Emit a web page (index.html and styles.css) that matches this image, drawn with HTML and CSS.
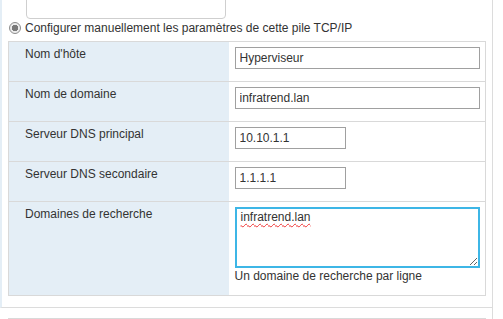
FILE: index.html
```html
<!DOCTYPE html>
<html lang="fr">
<head>
  <meta charset="UTF-8">
  <title>Pile TCP/IP</title>
  <link rel="stylesheet" href="styles.css">
</head>
<body>
  <div class="panel">
    <div class="prev-box"></div>
    <label class="radio-row">
      <input type="radio" name="mode" checked>
      <span>Configurer manuellement les paramètres de cette pile TCP/IP</span>
    </label>
    <table class="settings">
      <colgroup>
        <col class="col-label">
        <col class="col-value">
      </colgroup>
      <tr>
        <td class="label">Nom d'hôte</td>
        <td class="value"><input type="text" class="wide" value="Hyperviseur"></td>
      </tr>
      <tr>
        <td class="label">Nom de domaine</td>
        <td class="value"><input type="text" class="wide" value="infratrend.lan"></td>
      </tr>
      <tr>
        <td class="label">Serveur DNS principal</td>
        <td class="value"><input type="text" class="short" value="10.10.1.1"></td>
      </tr>
      <tr>
        <td class="label">Serveur DNS secondaire</td>
        <td class="value"><input type="text" class="short" value="1.1.1.1"></td>
      </tr>
      <tr>
        <td class="label">Domaines de recherche</td>
        <td class="value">
          <textarea class="search">infratrend.lan</textarea>
          <div class="hint">Un domaine de recherche par ligne</div>
        </td>
      </tr>
    </table>
  </div>
  <div class="panel next">
    <div class="next-box"></div>
  </div>
</body>
</html>
```

FILE: styles.css
```css
body {
  margin: 0;
  font-family: 'Liberation Sans', Arial, sans-serif;
  font-size: 12px;
  color: #333;
  background: #fff;
  overflow: hidden;
}

.panel {
  width: 478px;
  padding: 0 6px 11px 6px;
  border-left: 2px solid #e4eef6;
  border-right: 1px solid #dcdcdc;
  border-bottom: 1px solid #dcdcdc;
}

.prev-box {
  margin: -12px 0 0 18px;
  width: 198px;
  height: 29px;
  border: 1px solid #cfcfcf;
  border-radius: 4px;
}

.radio-row {
  display: flex;
  align-items: center;
  gap: 4px;
  height: 16px;
  margin: 1px 0 5px 1px;
  line-height: 14px;
}

.radio-row input {
  appearance: none;
  margin: 0;
  width: 12px;
  height: 12px;
  border: 1px solid #8c8c8c;
  border-radius: 50%;
  background: radial-gradient(circle, #7a7a7a 0 3px, #ececec 3.5px);
}

.settings {
  width: 478px;
  border-collapse: collapse;
  table-layout: fixed;
  border: 1px solid #d9d9d9;
}

.col-label {
  width: 220px;
}

.settings tr {
  border-top: 1px solid #d9d9d9;
}

.settings td {
  vertical-align: top;
  line-height: 14px;
}

.label {
  background: #e4eef6;
  padding: 5px 16px 0 16px;
}

.value {
  padding: 5px 6px 12px 6px;
}

input[type="text"] {
  box-sizing: border-box;
  height: 22px;
  margin: 0;
  padding: 0 4px;
  font: inherit;
  color: #333;
  border: 1px solid #a0a0a0;
  display: block;
}

.wide {
  width: 245px;
}

.short {
  width: 111px;
}

.search {
  display: block;
  box-sizing: border-box;
  width: 245px;
  height: 61px;
  margin: 0;
  padding: 1px 4px;
  font: inherit;
  line-height: 14px;
  color: #333;
  border: 2px solid #3db6e6;
  outline: none;
  text-decoration: underline wavy #e33 1px;
  text-underline-offset: 2px;
}

.hint {
  margin-top: 1px;
}

.next {
  border-bottom: none;
  padding-top: 10px;
  padding-bottom: 0;
  border-left-color: #fff;
}

.next-box {
  height: 0;
  border-top: 1px solid #d9d9d9;
}
```
